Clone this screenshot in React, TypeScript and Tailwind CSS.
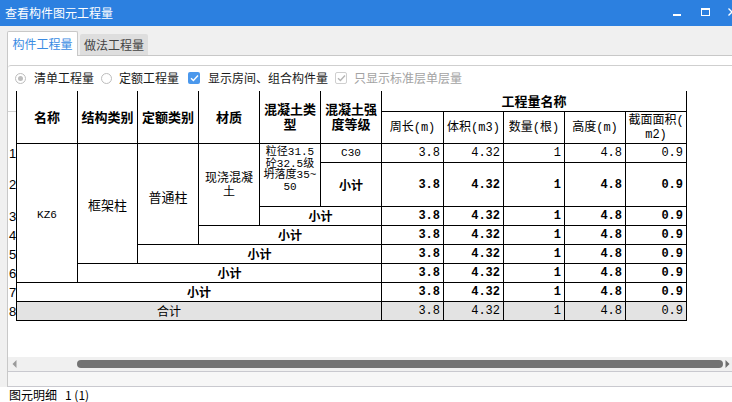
import React from "react";

// fonts
const CJK = "font-[family-name:'Noto_Sans_CJK_SC',sans-serif]";
const MONO = "font-[family-name:'Liberation_Mono','Noto_Sans_CJK_SC',monospace]";
// latin metrics first so wrapped lines keep a compact box
const TIGHT = "font-[family-name:'Liberation_Sans','Noto_Sans_CJK_SC',sans-serif]";

// grid cell with right/bottom rule
const line = "border-r border-b border-black flex items-center";

const rowStarts = [
  "row-start-3",
  "row-start-4",
  "row-start-5",
  "row-start-6",
  "row-start-7",
  "row-start-8",
  "row-start-9",
  "row-start-10",
];
const numCols = ["col-start-8", "col-start-9", "col-start-10", "col-start-11", "col-start-12"];
const values = ["3.8", "4.32", "1", "4.8", "0.9"];

function Radio({ checked }: { checked?: boolean }) {
  return (
    <span className="w-[11px] h-[11px] rounded-full border border-[#bdbdbd] bg-white flex items-center justify-center">
      {checked && <span className="w-[5px] h-[5px] rounded-full bg-[#bdbdbd]" />}
    </span>
  );
}

function Check({ disabled }: { disabled?: boolean }) {
  return (
    <span
      className={
        disabled
          ? "w-[12px] h-[12px] rounded-[2px] border border-[#cfcfcf] bg-white flex items-center justify-center"
          : "w-[12px] h-[12px] rounded-[2px] bg-[#4b98ec] flex items-center justify-center"
      }
    >
      <svg width="9" height="8" viewBox="0 0 9 8">
        <path
          d="M1 4.2 L3.4 6.5 L8 1.5"
          fill="none"
          stroke={disabled ? "#b5b5b5" : "#ffffff"}
          strokeWidth="1.4"
        />
      </svg>
    </span>
  );
}

function QuantityGrid() {
  return (
    <div className="grid grid-cols-[8px_62px_60px_61px_61px_61px_61px_62px_60px_61px_61px_61px] grid-rows-[21px_32px_19px_44px_19px_19px_19px_19px_19px_19px] text-black">
      {/* header */}
      <div className="col-start-1 row-start-1 border-b border-[#d4d4d4]" />
      <div className={`${line} border-l col-start-2 row-start-1 row-span-2 justify-center font-bold text-[13px]`}>名称</div>
      <div className={`${line} col-start-3 row-start-1 row-span-2 justify-center font-bold text-[13px]`}>结构类别</div>
      <div className={`${line} col-start-4 row-start-1 row-span-2 justify-center font-bold text-[13px]`}>定额类别</div>
      <div className={`${line} col-start-5 row-start-1 row-span-2 justify-center font-bold text-[13px]`}>材质</div>
      <div className={`${line} col-start-6 row-start-1 row-span-2 justify-center text-center font-bold text-[13px] leading-[15px] ${TIGHT}`}>
        混凝土类
        <br />
        型
      </div>
      <div className={`${line} col-start-7 row-start-1 row-span-2 justify-center text-center font-bold text-[13px] leading-[15px] ${TIGHT}`}>
        混凝土强
        <br />
        度等级
      </div>
      <div className={`${line} col-start-8 col-span-5 row-start-1 justify-center font-bold text-[13px]`}>工程量名称</div>
      <div className={`${line} col-start-8 row-start-2 justify-center text-[12px] ${MONO}`}>周长(m)</div>
      <div className={`${line} col-start-9 row-start-2 justify-center text-[12px] ${MONO}`}>体积(m3)</div>
      <div className={`${line} col-start-10 row-start-2 justify-center text-[12px] ${MONO}`}>数量(根)</div>
      <div className={`${line} col-start-11 row-start-2 justify-center text-[12px] ${MONO}`}>高度(m)</div>
      <div className={`${line} col-start-12 row-start-2 justify-center text-center text-[12px] leading-[14px] ${MONO}`}>
        截面面积(
        <br />
        m2)
      </div>

      {/* row numbers */}
      {rowStarts.map((r, i) => (
        <div key={r} className={`col-start-1 ${r} flex items-center pl-[1px] text-[13px] font-['Liberation_Sans']`}>
          {i + 1}
        </div>
      ))}

      {/* merged text cells */}
      <div className={`${line} border-l col-start-2 row-start-3 row-span-6 justify-center pt-[4px] text-[11px] ${MONO}`}>KZ6</div>
      <div className={`${line} col-start-3 row-start-3 row-span-5 justify-center pt-[2px] text-[13px]`}>框架柱</div>
      <div className={`${line} col-start-4 row-start-3 row-span-4 justify-center pt-[6px] text-[13px]`}>普通柱</div>
      <div className={`${line} col-start-5 row-start-3 row-span-3 justify-center text-center text-[12px] leading-[14px] ${TIGHT}`}>
        现浇混凝
        <br />
        土
      </div>
      <div className={`col-start-6 row-start-3 row-span-2 border-r border-b border-black flex flex-col items-center pt-[3px] text-[11px] leading-[11.5px] ${MONO}`}>
        <span>粒径31.5</span>
        <span>砼32.5级</span>
        <span>坍落度35~</span>
        <span>50</span>
      </div>
      <div className={`${line} col-start-7 row-start-3 justify-center text-[11px] ${MONO}`}>C30</div>
      <div className={`${line} col-start-7 row-start-4 justify-center font-bold text-[12px]`}>小计</div>
      <div className={`${line} col-start-6 col-span-2 row-start-5 justify-center font-bold text-[12px]`}>小计</div>
      <div className={`${line} col-start-5 col-span-3 row-start-6 justify-center font-bold text-[12px]`}>小计</div>
      <div className={`${line} col-start-4 col-span-4 row-start-7 justify-center font-bold text-[12px]`}>小计</div>
      <div className={`${line} col-start-3 col-span-5 row-start-8 justify-center font-bold text-[12px]`}>小计</div>
      <div className={`${line} border-l col-start-2 col-span-6 row-start-9 justify-center font-bold text-[12px]`}>小计</div>
      <div className={`${line} border-l col-start-2 col-span-6 row-start-10 bg-[#e3e3e3] pl-[140px] text-[12px]`}>合计</div>

      {/* quantity values */}
      {rowStarts.map((r, i) =>
        values.map((v, j) => (
          <div
            key={r + j}
            className={`${line} ${r} ${numCols[j]} justify-end pr-[3px] text-[12px] ${MONO} ${
              i === 0 || i === 7 ? "font-normal" : "font-bold"
            } ${i === 7 ? "bg-[#e3e3e3]" : ""}`}
          >
            {v}
          </div>
        ))
      )}
    </div>
  );
}

export default function App() {
  return (
    <div className={`w-[732px] h-[402px] overflow-hidden bg-[#f0f0f0] flex flex-col ${CJK}`}>
      {/* title bar */}
      <div className="h-[26px] shrink-0 bg-[#2c80e0] flex items-center pl-[5px] text-white text-[12px]">
        <span>查看构件图元工程量</span>
        <div className="ml-auto -mr-[4px] flex items-center">
          <span className="w-[8px] h-[2px] bg-white mt-[3px]" />
          <span className="ml-[20px] w-[9px] h-[8px] border border-white border-t-2 -mt-[3px]" />
          <svg className="ml-[18px] -mt-[2px]" width="8" height="8" viewBox="0 0 8 8">
            <path d="M0.5 0.5 L7.5 7.5 M7.5 0.5 L0.5 7.5" stroke="#fff" strokeWidth="1.3" />
          </svg>
        </div>
      </div>

      {/* tabs */}
      <div className="h-[29px] shrink-0 flex items-end pl-[7px]">
        <div className="relative z-10 -mb-px h-[25px] w-[71px] bg-white border border-b-0 border-[#c8c8c8] rounded-t-[2px] flex items-center justify-center text-[12px] text-[#3a8be3]">
          构件工程量
        </div>
        <div className="ml-[2px] h-[21px] w-[68px] bg-[#dedede] rounded-t-[2px] flex items-center justify-center text-[12px] text-[#444]">
          做法工程量
        </div>
      </div>

      {/* body */}
      <div className="flex-1 flex min-h-0">
        <div className="w-[7px] shrink-0" />
        <div className="flex-1 flex flex-col bg-white border-l border-t border-[#c8c8c8]">
          <div className="h-[9px] shrink-0" />
          <div className="flex-1 flex flex-col border-t border-[#cfcfcf] rounded-tl-[3px] min-h-0">
            {/* options */}
            <div className="h-[24px] shrink-0 flex items-center pl-[7px] text-[12px] text-[#1a1a1a]">
              <Radio checked />
              <span className="ml-[8px]">清单工程量</span>
              <span className="ml-[7px]">
                <Radio />
              </span>
              <span className="ml-[7px]">定额工程量</span>
              <span className="ml-[9px]">
                <Check />
              </span>
              <span className="ml-[8px]">显示房间、组合构件量</span>
              <span className="ml-[7px]">
                <Check disabled />
              </span>
              <span className="ml-[7px] text-[#a3a3a3]">只显示标准层单层量</span>
            </div>

            <div className="flex-1 pt-[1px]">
              <QuantityGrid />
            </div>

            {/* horizontal scrollbar */}
            <div className="h-[14px] shrink-0 bg-[#f0f0f0] flex items-center">
              <svg className="ml-[4px]" width="5" height="8" viewBox="0 0 5 8">
                <path d="M4.5 0 L0.5 4 L4.5 8 Z" fill="#9a9a9a" />
              </svg>
              <span className="ml-[60px] w-[646px] h-[8px] rounded-full bg-[#737373]" />
              <svg className="ml-[2px]" width="5" height="8" viewBox="0 0 5 8">
                <path d="M0.5 0 L4.5 4 L0.5 8 Z" fill="#6e6e6e" />
              </svg>
            </div>
            <div className="h-[16px] shrink-0 bg-[#f7f7f7] border-t border-b border-[#c9c9cf]" />
          </div>
        </div>
      </div>

      {/* status line */}
      <div className="h-[15px] shrink-0 bg-white flex items-center pl-[9px] text-[12px] text-black">
        <span>图元明细</span>
        <span className="ml-[8px]">1 (1)</span>
      </div>
    </div>
  );
}
